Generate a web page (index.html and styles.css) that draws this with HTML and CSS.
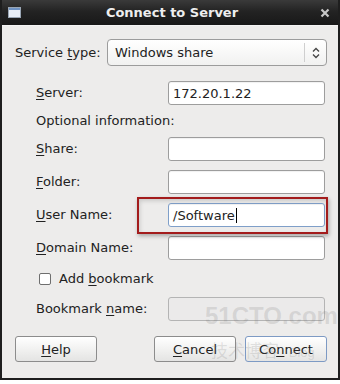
FILE: index.html
```html
<!DOCTYPE html>
<html lang="en">
<head>
    <meta charset="UTF-8">
    <title>Connect to Server</title>
    <link rel="stylesheet" href="styles.css">
</head>
<body>

    <div class="window">

        <div class="titlebar">
            <svg class="win-icon" width="13" height="11" viewBox="0 0 13 11">
                <rect x="0.5" y="0.5" width="12" height="10" fill="#e8eef6" stroke="#9aa6b4"/>
                <rect x="1" y="1" width="11" height="2" fill="#6f93c4"/>
            </svg>
            <span class="title">Connect to Server</span>
            <svg class="close" width="10" height="10" viewBox="0 0 10 10">
                <path d="M1.5 1.5 L8.5 8.5 M8.5 1.5 L1.5 8.5" stroke="#c8c8c8" stroke-width="2.2"/>
            </svg>
        </div>

        <div class="content">

            <div class="service-row">
                <span class="label">Service <u>t</u>ype:</span>
                <div class="combo">
                    <span class="combo-text">Windows share</span>
                    <span class="combo-arrow">
                        <svg width="8" height="12" viewBox="0 0 8 12">
                            <path d="M1 4.5 L4 1.5 L7 4.5 M1 7.5 L4 10.5 L7 7.5" fill="none" stroke="#444" stroke-width="1.3"/>
                        </svg>
                    </span>
                </div>
            </div>

            <div class="fields">
                <span class="label"><u>S</u>erver:</span>
                <div class="entry">172.20.1.22</div>

                <span class="label section-label">Optional information:</span>

                <span class="label"><u>S</u>hare:</span>
                <div class="entry"></div>

                <span class="label"><u>F</u>older:</span>
                <div class="entry"></div>

                <span class="label"><u>U</u>ser Name:</span>
                <div class="entry-wrap">
                    <div class="entry focused">/Software<span class="cursor"></span></div>
                    <div class="highlight"></div>
                </div>

                <span class="label"><u>D</u>omain Name:</span>
                <div class="entry"></div>

                <div class="check-row">
                    <span class="checkbox"></span>
                    <span>Add <u>b</u>ookmark</span>
                </div>

                <span class="label">Bookmark <u>n</u>ame:</span>
                <div class="entry disabled"></div>
            </div>

            <div class="buttons">
                <button class="btn"><u>H</u>elp</button>
                <span class="spacer"></span>
                <button class="btn"><u>C</u>ancel</button>
                <button class="btn default">Co<u>n</u>nect</button>
            </div>

        </div>

        <!-- marca de agua del blog -->
        <div class="watermark">
            <span class="wm-big">51CTO.com</span>
            <span class="wm-small">技术博客 <em>Blog</em></span>
        </div>

    </div>

</body>
</html>
```

FILE: styles.css
```css
/* Ventana GTK estilo Clearlooks */
body {
    margin: 0;
    background-color: #fff;
    font-family: 'DejaVu Sans', sans-serif;
    font-size: 13px;
    color: #222;
}

.window {
    position: relative;
    width: 340px;
    height: 380px;
    box-sizing: border-box;
    background-color: #edeceb;
    border: 2px solid #1e1e1e;
    border-top: none;
    overflow: hidden;
}

/* --- Barra de título --- */
.titlebar {
    height: 25px;
    margin: 0 -2px;
    display: flex;
    align-items: center;
    padding: 0 10px 0 8px;
    background: linear-gradient(#3a3a3a, #232323 45%, #181818);
    border-bottom: 1px solid #f4f4f4;
}

.win-icon {
    flex: none;
}

.title {
    flex: 1;
    text-align: center;
    color: #eeeeee;
    font-weight: bold;
    font-size: 13px;
    padding-left: 3px;
}

.close {
    flex: none;
}

/* --- Contenido --- */
.content {
    padding: 13px 11px 0 13px;
}

.label {
    display: block;
    line-height: 24px;
    white-space: nowrap;
}

u {
    text-decoration: underline;
    text-underline-offset: 2px;
}

.service-row {
    display: flex;
    align-items: center;
    height: 27px;
}

.service-row .label {
    width: 92px;
    flex: none;
}

.combo {
    flex: 1;
    height: 27px;
    box-sizing: border-box;
    display: flex;
    align-items: center;
    border: 1px solid #9c9c9c;
    border-radius: 4px;
    background: linear-gradient(#ffffff, #f1f1f0);
}

.combo-text {
    flex: 1;
    padding-left: 7px;
}

.combo-arrow {
    width: 21px;
    height: 19px;
    border-left: 1px solid #cfcfcf;
    display: flex;
    align-items: center;
    justify-content: center;
}

.fields {
    display: grid;
    grid-template-columns: 132px 157px;
    grid-template-rows: 24px 14px 24px 24px 24px 24px 19px 24px;
    row-gap: 9px;
    margin: 15px 0 0 21px;
}

.section-label {
    grid-column: 1 / 3;
    line-height: 14px;
}

.entry {
    height: 24px;
    box-sizing: border-box;
    border: 1px solid #9d9d9d;
    border-radius: 3px;
    background-color: #fff;
    padding-left: 4px;
    display: flex;
    align-items: center;
    box-shadow: inset 0 1px 1px rgba(0,0,0,0.06);
}

.entry.focused {
    border-color: #7f9fc9;
}

.entry.disabled {
    background-color: #ebeaea;
    border-color: #b4b4b4;
    box-shadow: none;
}

.cursor {
    display: inline-block;
    width: 1px;
    height: 15px;
    background-color: #000;
    margin-left: 1px;
}

.entry-wrap {
    position: relative;
}

/* recuadro rojo de la captura */
.highlight {
    position: absolute;
    left: -31px;
    top: -6px;
    right: -3px;
    bottom: -7px;
    border: 2px solid #a31c1c;
    box-shadow: 1px 2px 4px rgba(0,0,0,0.3), inset 1px 2px 4px rgba(0,0,0,0.15);
}

.check-row {
    grid-column: 1 / 3;
    display: flex;
    align-items: center;
    gap: 8px;
    padding-left: 3px;
}

.checkbox {
    width: 10px;
    height: 10px;
    border: 1px solid #6e6e6e;
    border-radius: 2px;
    background-color: #fff;
}

/* --- Botones --- */
.buttons {
    display: flex;
    gap: 9px;
    margin-top: 15px;
}

.spacer {
    flex: 1;
}

.btn {
    width: 82px;
    height: 26px;
    font-family: 'DejaVu Sans', sans-serif;
    font-size: 13px;
    color: #222;
    border: 1px solid #8c8c8c;
    border-radius: 3px;
    background: linear-gradient(#ffffff, #efefee 60%, #e4e4e3);
    padding: 0;
}

.btn.default {
    border-color: #7d9ac4;
}

/* --- Marca de agua --- */
.watermark {
    position: absolute;
    left: 203px;
    top: 302px;
    display: flex;
    flex-direction: column;
    color: rgba(120,120,120,0.2);
    pointer-events: none;
}

.wm-big {
    font-family: 'Liberation Sans', sans-serif;
    font-weight: bold;
    font-size: 24px;
    line-height: 28px;
}

.wm-small {
    font-family: 'Noto Sans CJK SC', sans-serif;
    font-size: 17px;
    line-height: 24px;
    margin-top: 8px;
    padding-left: 6px;
}

.wm-small em {
    font-style: normal;
    font-family: 'Liberation Sans', sans-serif;
    font-size: 13px;
    margin-left: 6px;
}
```
